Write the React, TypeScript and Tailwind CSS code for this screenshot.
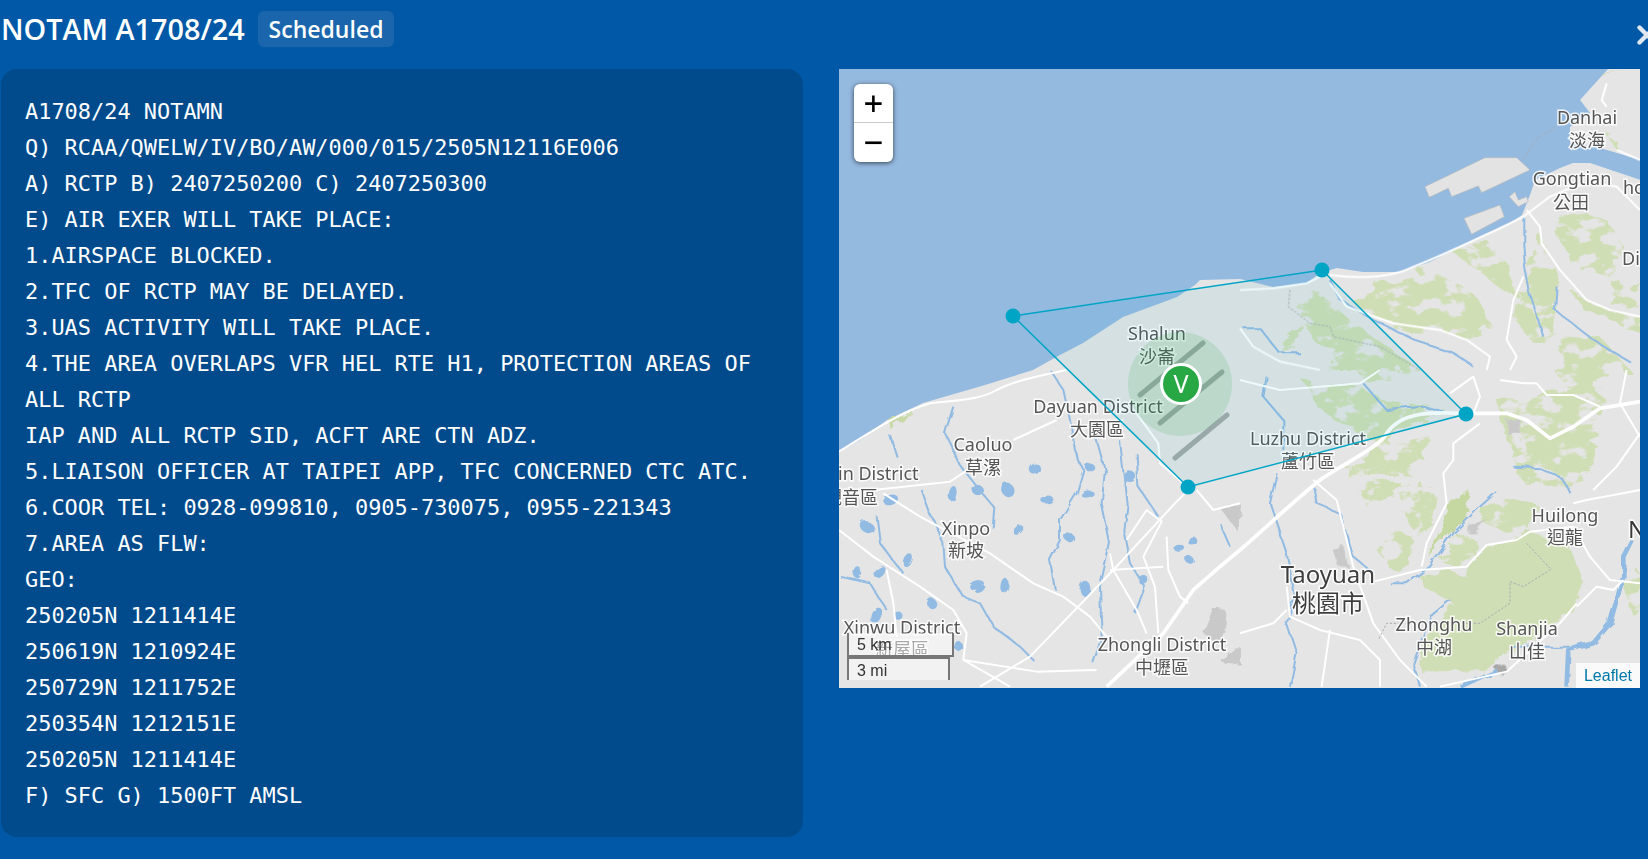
import { X } from 'lucide-react';

const notamText = `A1708/24 NOTAMN
Q) RCAA/QWELW/IV/BO/AW/000/015/2505N12116E006
A) RCTP B) 2407250200 C) 2407250300
E) AIR EXER WILL TAKE PLACE:
1.AIRSPACE BLOCKED.
2.TFC OF RCTP MAY BE DELAYED.
3.UAS ACTIVITY WILL TAKE PLACE.
4.THE AREA OVERLAPS VFR HEL RTE H1, PROTECTION AREAS OF ALL RCTP
IAP AND ALL RCTP SID, ACFT ARE CTN ADZ.
5.LIAISON OFFICER AT TAIPEI APP, TFC CONCERNED CTC ATC.
6.COOR TEL: 0928-099810, 0905-730075, 0955-221343
7.AREA AS FLW:
GEO:
250205N 1211414E
250619N 1210924E
250729N 1211752E
250354N 1212151E
250205N 1211414E
F) SFC G) 1500FT AMSL`;

// map drawing is traced in three overlapping sheets, each with its own origin
const sheetNE = 'translate(1240 0) scale(.3333)';
const sheetSW = 'translate(830 370) scale(.3333)';
const sheetSE = 'translate(1240 370) scale(.3333)';

const forestNE = [
  '340,910 410,840 480,850 540,800 620,830 700,880 760,980 660,1010 540,1000 430,970',
  '640,760 740,720 800,790 830,880 800,880 700,800',
  '960,650 1040,640 1110,670 1150,740 1110,830 1000,800 950,700',
  '840,850 900,700 960,830 930,1040 880,1030 820,950',
  '1000,880 1100,930 1200,950 1200,1000 1030,930',
  '1090,240 1150,210 1100,230',
  '1090,390 1150,410 1120,440',
  '160,910 240,880 330,960 440,1040 540,1110 220,1110 300,1060 220,1020',
  '130,1020 190,975 170,1040 130,1060',
  '960,1000 1080,1010 1170,1110 970,1110',
  '1120,860 1190,840 1190,920 1120,920',
];

const forestSE = [
  '200,45 330,40 430,90 530,110 600,100 620,130 480,170 440,230 320,170 240,120',
  '350,0 480,0 440,30 370,25',
  '320,300 400,240 570,200 550,270 500,310 400,320 340,335',
  '345,350 500,330 470,380 380,410',
  '485,380 545,335 550,420 525,490 490,430',
  '545,370 590,355 570,490 540,510',
  '420,550 450,470 525,510 520,550 480,610 445,590',
  '600,570 650,510 700,500 705,560 660,590',
  '940,0 1120,0 1050,60 980,50',
  '1150,640 1200,600 1200,700 1170,730',
  '770,90 890,85 1040,40 1100,90 1050,220 1080,230 990,360 900,340 850,340 830,290',
  '730,420 790,380 850,400 900,410 860,480 810,500 720,450',
];

// the large solid block south of the highway
const forestSolid = '860,480 990,530 1030,640 1000,720 910,790 780,860 740,900 540,905 545,820 640,700 550,650 540,620 620,600 680,620 690,580 750,530 810,510';

const riversNE = [
  'M850 650 L850 730 L855 800 L870 880 L910 1010',
  'M950 860 L945 930 L1060 1020 L1170 1085',
  'M270 840 L300 900 L400 960 L520 1020 L640 1060 L700 1100',
  'M10 985 L60 985 L120 1060 L180 1060',
];

const riversSW = [
  'M370 110 L345 190 L400 300 L490 410 L485 470',
  'M275 360 L300 430 L340 520 L345 590 L400 680 L450 700 L490 770 L570 830 L610 870',
  'M660 0 L700 60 L720 150 L735 240 L760 300 L740 370 L690 450 L690 510 L660 570 L675 660',
  'M800 210 L825 300 L815 400 L830 470 L840 520 L810 650 L815 800 L790 880',
  'M870 210 L890 400 L880 480 L900 580 L945 650 L915 730',
  'M920 250 L925 350 L985 440',
  'M180 195 L200 260 M140 440 L150 520 L220 610',
  'M30 620 L120 640 L170 720',
  'M1170 460 L1200 530',
];

const riversSE = [
  'M820 290 L900 295 L970 330 L990 370',
  'M770 365 L720 410 L640 490 L570 590 L500 640 L450 640',
  'M630 690 L570 740 L520 880 L540 950',
  'M220 350 L230 400 L300 430 L340 560 L400 610',
  'M110 310 L90 400 L140 550 L165 680 L140 760 L170 850 L150 950',
  'M370 40 L440 120 L550 110 L620 130',
  'M80 20 L70 80 L130 150 L130 240',
  'M810 830 L990 830',
];

const roadsNE = [
  'M270 825 C350 835 450 835 520 800 C600 770 700 720 770 690 L850 650 L930 590 L1000 560 L1060 550 L1130 560 L1200 630',
  'M860 630 L900 680 L905 730 L960 810 L1040 900 L1110 930 L1200 950',
  'M1100 250 L1085 300 L1100 320 M1130 450 L1200 480',
  'M850 830 L820 900 L800 1020 L830 1070 L810 1110',
  'M0 870 L100 865 L200 850 L240 830',
  'M270 850 L320 920 L460 970 L600 990 L680 1020 L750 1070 L740 1110',
  'M0 985 L40 1040 L120 1085 L240 1110',
];

const roadsSW = [
  'M27 245 C100 200 200 130 300 100 C380 90 450 90 500 60 C560 30 640 15 710 0',
  'M550 210 L680 150',
  'M130 360 L360 335 L420 295',
  'M160 370 L270 440 L480 550 L610 640 L700 680 L780 740 L830 800',
  'M450 950 L600 860 L740 715 L850 600 L1035 400 L1075 360',
  'M27 480 L130 560 L270 650 L370 720 L410 790 L400 870 L540 950',
  'M840 550 L850 600 L920 720 L950 790 M840 600 L1000 590',
  'M1010 500 L1015 600 L1050 680 L1075 700',
  'M890 510 L950 420 L995 455 L940 560 L975 650 L985 790',
  'M170 600 L190 700 L200 800',
  'M920 130 L985 220 L990 280 L1060 340',
  'M1100 360 L1150 420 L1230 400',
  'M400 870 L620 905 L800 900',
];

const roadsSE = [
  'M720 160 L640 220 L640 270 L610 310 L620 400 L560 520 L545 590',
  'M400 635 L540 600 L680 590 L740 525 L830 510 L870 485 L1000 470 L1050 560 L1110 630 L1200 640',
  'M220 330 L290 390 L340 590 L400 760 L480 870 L560 950',
  'M140 650 L150 740 L240 780 L360 810 L420 870 L420 950',
  'M0 790 L100 760 L140 720',
  'M700 130 L720 80 L700 20 L630 70',
  'M780 30 L850 40 L890 40 L920 75 L1000 75 L1080 110',
  'M1000 400 L1040 390 L1200 360',
  'M1010 710 L1070 650 L1120 660 L1150 630',
  'M600 950 L800 905 L960 760 L1010 700',
  'M270 780 L245 950',
  'M1200 190 L1130 290 L1060 360',
  'M0 30 L120 60 L360 40 L420 0',
  'M1160 0 L1140 100 L1200 200',
];

// x, y, rx, ry, rotation
const pondsSW = [
  [615, 297, 13, 15, 30], [780, 292, 14, 10, 10], [900, 320, 16, 14, 0], [532, 358, 16, 18, -20],
  [365, 368, 10, 20, 10], [445, 362, 16, 14, 40], [652, 390, 16, 9, -10], [772, 372, 17, 9, -10],
  [182, 390, 20, 13, -20], [110, 470, 20, 15, 40], [565, 480, 15, 10, -40], [716, 500, 12, 12, 0],
  [235, 572, 10, 18, 25], [150, 607, 11, 18, 40], [85, 610, 10, 16, 0], [440, 645, 20, 12, -15],
  [453, 660, 15, 8, -30], [522, 645, 9, 19, 10], [765, 655, 14, 20, 0], [305, 700, 12, 13, 0],
  [138, 735, 14, 22, 20], [205, 737, 11, 11, 0], [1045, 532, 15, 9, 0], [1088, 513, 12, 12, 0],
  [1080, 571, 14, 10, 40], [940, 630, 13, 13, 0], [385, 828, 10, 13, 0],
];

const labels: [string, number, number, number?][] = [
  ['Danhai', 1587, 124], ['淡海', 1587, 147], ['Gongtian', 1572, 185], ['公田', 1571, 209],
  ['Shalun', 1157, 340], ['沙崙', 1157, 363], ['Dayuan District', 1098, 413], ['大園區', 1097, 436],
  ['Caoluo', 983, 451], ['草漯', 983, 474], ['Xinpo', 966, 535], ['新坡', 966, 557],
  ['Xinwu District', 902, 634], ['新屋區', 902, 656], ['Zhongli District', 1162, 651], ['中壢區', 1162, 674],
  ['Luzhu District', 1308, 445], ['蘆竹區', 1308, 468], ['Zhonghu', 1434, 631], ['中湖', 1434, 654],
  ['Shanjia', 1527, 635], ['山佳', 1527, 658], ['Huilong', 1565, 522], ['迴龍', 1565, 544],
  ['Taoyuan', 1328, 583, 24], ['桃園市', 1328, 612, 24],
  ['Guanyin District', 851, 480], ['觀音區', 851, 504],
  ['ho', 1634, 194], ['Di', 1631, 265],
];

function NotamMap() {
  return (
    <svg viewBox="839 69 801 619" className="block w-[801px] h-[619px] font-['Noto_Sans','Noto_Sans_CJK_TC',sans-serif]">
      <defs>
        {/* wobbles an edge so traced shapes don't look ruled */}
        <filter id="rough" x="-5%" y="-5%" width="110%" height="110%">
          <feTurbulence type="fractalNoise" baseFrequency="0.09" numOctaves="3" seed="4" />
          <feDisplacementMap in="SourceGraphic" scale="9" />
        </filter>
        <filter id="wiggle" x="-5%" y="-5%" width="110%" height="110%">
          <feTurbulence type="fractalNoise" baseFrequency="0.06" numOctaves="2" seed="9" />
          <feDisplacementMap in="SourceGraphic" scale="7" />
        </filter>
        {/* eats streaks out of the forest so it reads as feathered ridges */}
        <filter id="feather" x="-5%" y="-5%" width="110%" height="110%">
          <feTurbulence type="fractalNoise" baseFrequency="0.045 0.07" numOctaves="4" seed="12" result="noise" />
          <feDisplacementMap in="SourceGraphic" in2="noise" scale="16" result="moved" />
          <feColorMatrix in="noise" type="matrix" values="0 0 0 0 0 0 0 0 0 0 0 0 0 0 0 9 0 0 0 -3.2" result="mask" />
          <feComposite in="moved" in2="mask" operator="in" />
        </filter>
      </defs>

      <rect x="839" y="69" width="801" height="619" fill="#95bae0" />
      {/* land */}
      <path
        fill="#e5e5e5"
        d="M839 452 L860 440 L887 420 L923 403 L985 385 L1033 370 L1060 355 L1083 343 L1103 330 L1123 317 L1150 307 L1177 297 L1195 285 L1200 280 L1240 279 L1273 287 L1307 283 L1320 273 L1337 268 L1363 272 L1400 272 L1430 262 L1453 250 L1500 227 L1512 222 L1522 215 L1530 195 L1535 180 L1560 168 L1573 163 L1590 163 L1641 180 L1641 688 L839 688 Z M1608 69 L1580 100 L1590 113 L1570 127 L1570 143 L1600 148 L1641 160 L1641 69 Z"
      />
      {/* port */}
      <g transform={sheetNE} fill="#e3e3e3" stroke="#b5b9bd" strokeWidth="2">
        <polygon points="555,560 735,473 830,473 870,510 725,578 715,558 635,590 625,565 568,592" />
        <polygon points="672,655 780,615 793,650 695,703" />
        <polygon points="808,590 825,575 835,600 860,590 865,605 835,620" />
      </g>

      <g filter="url(#feather)" fill="#d0deb5">
        <g transform={sheetNE}>
          {forestNE.map((p) => <polygon key={p} points={p} />)}
        </g>
        <g transform={sheetSE}>
          {forestSE.map((p) => <polygon key={p} points={p} />)}
        </g>
      </g>
      <g filter="url(#rough)" fill="#d0deb5">
        <g transform={sheetSE}>
          <polygon points={forestSolid} />
          <polygon fill="#c6d8a1" points="560,555 640,390 690,360 680,430 640,480" />
        </g>
        <g transform={sheetSW}>
          <polygon fill="#c9d9a6" points="175,145 280,108 240,130 180,178" />
        </g>
      </g>

      {/* built-up grey */}
      <g fill="#c9c9c9" filter="url(#rough)">
        <g transform={sheetSW}>
          <polygon points="1175,420 1230,400 1230,490 1205,460" />
          <polygon points="1130,760 1150,715 1185,720 1190,790 1150,810 1120,790" />
          <polygon points="1170,870 1230,830 1230,880 1190,885" />
        </g>
        <g transform={sheetSE}>
          <polygon points="800,150 840,145 840,190 805,195" />
          <polygon points="280,545 310,525 325,590 295,590" />
          <polygon points="685,470 740,450 710,490 685,490" />
          <polygon points="760,890 790,880 805,905 780,915" fill="#a8a8a8" />
        </g>
      </g>

      <g fill="none" stroke="#91bbe3" strokeWidth="6" strokeLinejoin="round" filter="url(#wiggle)">
        <g transform={sheetNE}>
          {riversNE.map((d) => <path key={d} d={d} />)}
        </g>
        <g transform={sheetSW}>
          {riversSW.map((d) => <path key={d} d={d} />)}
          {pondsSW.map(([x, y, rx, ry, r]) => (
            <ellipse key={`${x}-${y}`} cx={x} cy={y} rx={rx * 1.15} ry={ry * 1.15} transform={`rotate(${r} ${x} ${y})`} fill="#91bbe3" stroke="none" />
          ))}
        </g>
        <g transform={sheetSE}>
          {riversSE.map((d) => <path key={d} d={d} />)}
          <path d="M660 950 L770 900" strokeWidth="14" />
          <path d="M980 950 L985 840 L1060 820 L1110 760 L1150 620 L1150 560 L1175 510" strokeWidth="14" />
        </g>
      </g>

      <g fill="none" stroke="#fff" strokeWidth="6" strokeLinejoin="round">
        <g transform={sheetNE}>
          {roadsNE.map((d) => <path key={d} d={d} />)}
        </g>
        <g transform={sheetSW}>
          {roadsSW.map((d) => <path key={d} d={d} />)}
          <path d="M830 950 L1000 790 L1090 660 L1170 590 L1230 540" strokeWidth="11" />
        </g>
        <g transform={sheetSE}>
          {roadsSE.map((d) => <path key={d} d={d} />)}
          <path d="M0 540 C60 490 130 420 240 330 C330 270 420 230 440 190 C480 130 560 125 660 130" strokeWidth="11" />
          <path d="M700 130 L800 130 L860 150 L930 205 L1000 170 L1080 115 L1200 95" strokeWidth="11" />
        </g>
      </g>

      {/* dashed admin lines */}
      <g fill="none" stroke="#a9adb0" strokeWidth="3" strokeDasharray="7 5">
        <path transform={sheetNE} d="M850 480 L885 420 L950 380 M150 870 L145 920 L210 970 L270 980 L280 1010 L420 1040 L540 1110" />
        <path transform={sheetSE} d="M810 635 L850 650 L930 600 M810 640 L810 700 L720 760 L440 760 L415 810 M860 520 L935 600" />
      </g>

      {/* runways */}
      <g stroke="#8f9592" strokeWidth="5" strokeLinecap="round" opacity="0.75">
        <line x1="1203" y1="343" x2="1140" y2="395" />
        <line x1="1222" y1="372" x2="1160" y2="423" />
        <line x1="1227" y1="415" x2="1175" y2="458" />
      </g>

      {labels.map(([text, x, y, size]) => (
        <text
          key={text}
          x={x}
          y={y}
          textAnchor="middle"
          fontSize={size ?? 18}
          fill={size ? '#3e3e3e' : '#555'}
          stroke="#fff"
          strokeOpacity="0.85"
          strokeWidth="3"
          paintOrder="stroke"
        >
          {text}
        </text>
      ))}
      <text x="1628" y="538" fontSize="24" fill="#3a3a3a" stroke="#fff" strokeWidth="3" paintOrder="stroke">N</text>

      {/* NOTAM area */}
      <polygon points="1013,316 1322,270 1466,414 1188,487" fill="#00a5c5" fillOpacity="0.07" stroke="#00a5c5" strokeWidth="1.5" />
      <g fill="#00a5c5">
        <circle cx="1013" cy="316" r="7.5" />
        <circle cx="1322" cy="270" r="7.5" />
        <circle cx="1466" cy="414" r="7.5" />
        <circle cx="1188" cy="487" r="7.5" />
      </g>
      <circle cx="1180" cy="384" r="52" fill="#28a745" fillOpacity="0.15" />

      <circle cx="1181" cy="384" r="19.5" fill="#28a745" stroke="#fff" strokeWidth="3" />
      <text x="1181" y="393" textAnchor="middle" fontSize="25" fill="#fff">V</text>
    </svg>
  );
}

export default function App() {
  return (
    <div className="h-[859px] overflow-hidden bg-[#0058a6] font-['Open_Sans',sans-serif] text-white">
      {/* Header */}
      <div className="flex items-center justify-between h-[69px] pb-[11px] pl-[1px]">
        <div className="flex items-center gap-[13px]">
          <h1 className="text-[28.8px] leading-[36px] font-semibold">NOTAM A1708/24</h1>
          <span className="h-[36px] rounded-md bg-[#1a65ab] px-[11px] text-[23px] leading-[36px] font-semibold">Scheduled</span>
        </div>
        <X className="shrink-0 -mr-[14px] mt-[12px] text-[#dfe8f1]" size={30} strokeWidth={3.5} />
      </div>

      <div className="flex items-start gap-[36px] pl-[1px]">
        {/* Raw text */}
        <div className="w-[802px] h-[768px] rounded-2xl bg-[#014b8d] px-[24px] py-[25px] font-['DejaVu_Sans_Mono',monospace] text-[21.93px] leading-[36px] whitespace-pre-wrap">
          {notamText}
        </div>

        {/* Map */}
        <div className="relative w-[801px] h-[619px] overflow-hidden">
          <NotamMap />
          <div className="absolute left-[15px] top-[15px] w-[39px] h-[78px] rounded-md bg-white shadow-[0_1px_5px_rgba(0,0,0,0.65)] text-black font-['DejaVu_Sans_Mono',monospace] text-[32px] text-center">
            <div className="h-[39px] leading-[38px] border-b border-[#ccc]">+</div>
            <div className="h-[39px] leading-[38px]">−</div>
          </div>
          <div className="absolute left-[8px] bottom-[8px] font-['Liberation_Sans',sans-serif] text-[16px] leading-[24px] text-[#333]">
            <div className="w-[107px] h-[24px] border-2 border-t-0 border-[#777] bg-white/50 pl-[8px]">5 km</div>
            <div className="w-[103px] h-[23px] border-2 border-b-0 border-[#777] bg-white/50 pl-[8px]">3 mi</div>
          </div>
          <div className="absolute right-0 bottom-0 h-[25px] bg-white/80 px-[8px] font-['Liberation_Sans',sans-serif] text-[16px] leading-[25px] text-[#0078a8]">
            Leaflet
          </div>
        </div>
      </div>
    </div>
  );
}
